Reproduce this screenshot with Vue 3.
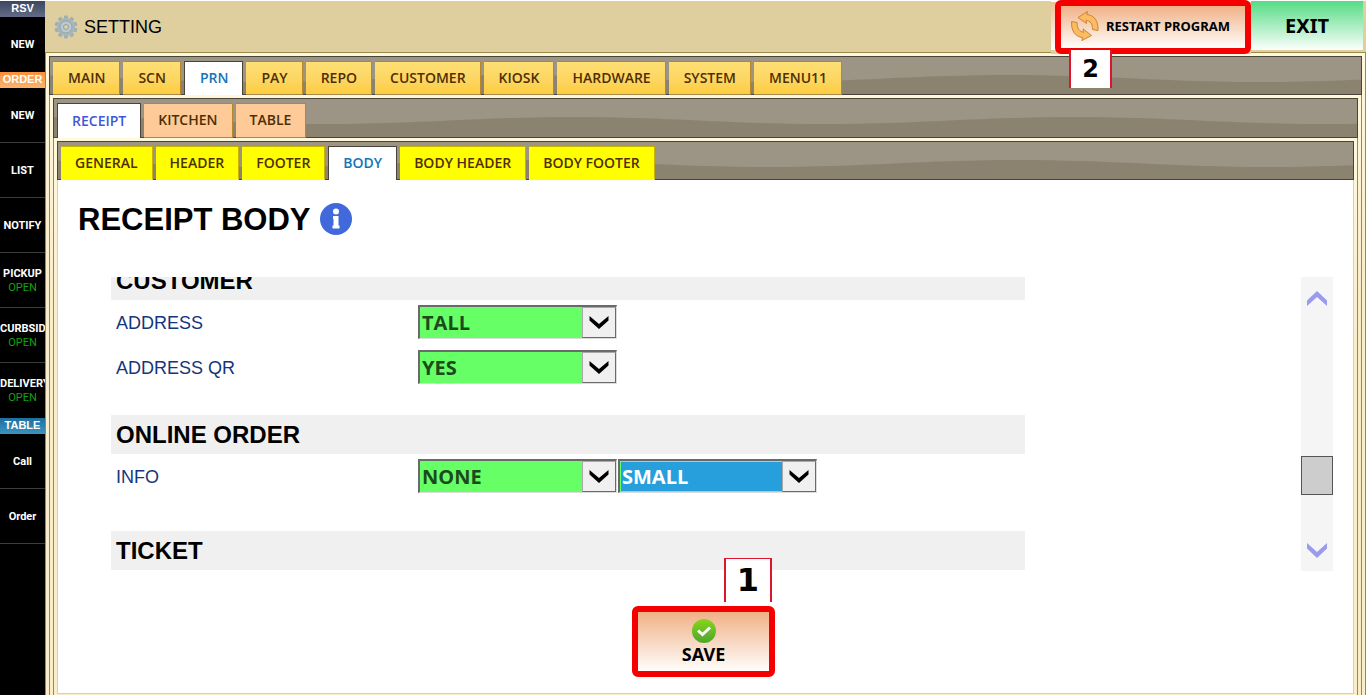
<script setup>
import { ref } from 'vue'

const sidebar = [
  { title: 'RSV', tone: 'slate', items: [{ label: 'NEW' }] },
  {
    title: 'ORDER',
    tone: 'orange',
    items: [
      { label: 'NEW' },
      { label: 'LIST' },
      { label: 'NOTIFY' },
      { label: 'PICKUP', status: 'OPEN' },
      { label: 'CURBSIDE', status: 'OPEN' },
      { label: 'DELIVERY', status: 'OPEN' }
    ]
  },
  { title: 'TABLE', tone: 'blue', items: [{ label: 'Call' }, { label: 'Order' }] }
]

const mainTabs = ['MAIN', 'SCN', 'PRN', 'PAY', 'REPO', 'CUSTOMER', 'KIOSK', 'HARDWARE', 'SYSTEM', 'MENU11']
const printTabs = ['RECEIPT', 'KITCHEN', 'TABLE']
const receiptTabs = ['GENERAL', 'HEADER', 'FOOTER', 'BODY', 'BODY HEADER', 'BODY FOOTER']

const mainTab = ref('PRN')
const printTab = ref('RECEIPT')
const receiptTab = ref('BODY')

const sections = ref([
  {
    title: 'CUSTOMER',
    rows: [
      { id: 'address', label: 'ADDRESS', fields: [{ value: 'TALL', options: ['TALL', 'SMALL', 'NONE'] }] },
      { id: 'address-qr', label: 'ADDRESS QR', fields: [{ value: 'YES', options: ['YES', 'NO'] }] }
    ]
  },
  {
    title: 'ONLINE ORDER',
    rows: [
      {
        id: 'info',
        label: 'INFO',
        fields: [
          { value: 'NONE', options: ['NONE', 'TALL', 'SMALL'] },
          { value: 'SMALL', options: ['SMALL', 'TALL'], active: true }
        ]
      }
    ]
  },
  { title: 'TICKET', rows: [] }
])
</script>

<template>
  <div class="app">
    <nav class="sidebar" aria-label="Orders">
      <section v-for="group in sidebar" :key="group.title" class="group">
        <h2 class="group-title" :class="group.tone">{{ group.title }}</h2>
        <button v-for="item in group.items" :key="item.label" type="button" class="side-item">
          <span>{{ item.label }}</span>
          <span v-if="item.status" class="status">{{ item.status }}</span>
        </button>
      </section>
    </nav>

    <div class="main">
      <header class="topbar">
        <svg class="gear" viewBox="0 0 24 24" aria-hidden="true">
          <g fill="#9fb0b4">
            <rect x="10" y="0.5" width="4" height="23" rx="1" />
            <rect x="10" y="0.5" width="4" height="23" rx="1" transform="rotate(36 12 12)" />
            <rect x="10" y="0.5" width="4" height="23" rx="1" transform="rotate(72 12 12)" />
            <rect x="10" y="0.5" width="4" height="23" rx="1" transform="rotate(108 12 12)" />
            <rect x="10" y="0.5" width="4" height="23" rx="1" transform="rotate(144 12 12)" />
          </g>
          <circle cx="12" cy="12" r="9" fill="#a9b6b8" />
          <circle cx="12" cy="12" r="6" fill="#b9c9cf" stroke="#94a5ab" stroke-width="1" />
          <circle cx="12" cy="12" r="2.500" fill="#d9cfa8" stroke="#8fa0a6" stroke-width="1" />
        </svg>
        <h1 class="app-title">SETTING</h1>
        <div class="restart-wrap">
          <button type="button" class="restart">
            <svg class="restart-icon" viewBox="0 0 28 30" aria-hidden="true">
              <g fill="#fabb62" stroke="#cf8234" stroke-width="1" stroke-linejoin="round">
                <path d="M7 6.500 L16.500 0.500 L15.800 3.600 C23 4 27.500 9.500 27 19.500 L21.500 18.500 C21.500 13 19.500 9.800 15 9.300 L15.500 12.500 Z" />
                <path d="M0.600 10.500 L6 11.500 C6 17.500 8.500 20.500 12.500 21.300 L12 17.800 L20.500 24.500 L10.800 29.600 L11.500 26.600 C4 25.500 0 19.500 0.600 10.500 Z" />
              </g>
            </svg>
            RESTART PROGRAM
          </button>
          <span class="callout callout-two">2</span>
        </div>
        <button type="button" class="exit">EXIT</button>
      </header>

      <div class="frame">
        <div class="tabbar" role="tablist" aria-label="Settings">
          <button
            v-for="tab in mainTabs" :key="tab" type="button" role="tab"
            class="tab gold" :class="{ on: tab === mainTab }" :aria-selected="tab === mainTab"
            @click="mainTab = tab"
          >{{ tab }}</button>
        </div>
        <div class="pane">
          <div class="tabbar second" role="tablist" aria-label="Printing">
            <button
              v-for="tab in printTabs" :key="tab" type="button" role="tab"
              class="tab peach" :class="{ on: tab === printTab }" :aria-selected="tab === printTab"
              @click="printTab = tab"
            >{{ tab }}</button>
          </div>
          <div class="pane">
            <div class="tabbar" role="tablist" aria-label="Receipt">
              <button
                v-for="tab in receiptTabs" :key="tab" type="button" role="tab"
                class="tab yellow" :class="{ on: tab === receiptTab }" :aria-selected="tab === receiptTab"
                @click="receiptTab = tab"
              >{{ tab }}</button>
            </div>
            <main class="content">
              <div class="heading">
                <h2>RECEIPT BODY</h2>
                <svg viewBox="0 0 32 32" role="img" aria-label="Information">
                  <circle cx="16" cy="16" r="16" fill="#4169dc" />
                  <circle cx="16" cy="8.500" r="3" fill="#fff" />
                  <path d="M13 13h5.500v9.500h1v3h-7v-3h1v-6.500h-0.500z" fill="#fff" />
                </svg>
              </div>

              <div class="viewport">
                <div class="sections">
                  <section v-for="section in sections" :key="section.title" class="section">
                    <h3>{{ section.title }}</h3>
                    <div v-for="row in section.rows" :key="row.id" class="row">
                      <label :for="row.id + '-0'">{{ row.label }}</label>
                      <div v-for="(field, i) in row.fields" :key="i" class="field">
                        <select
                          :id="row.id + '-' + i" v-model="field.value"
                          :class="{ active: field.active }" :aria-label="row.label"
                        >
                          <option v-for="option in field.options" :key="option">{{ option }}</option>
                        </select>
                        <span class="arrow">
                          <svg viewBox="0 0 20 13" aria-hidden="true"><path d="M0.500 0 L10 8 L19.500 0 V4.500 L10 13 L0.500 4.500 Z" fill="#000" /></svg>
                        </span>
                      </div>
                    </div>
                  </section>
                </div>
                <div class="scroller">
                  <button type="button" aria-label="Scroll up">
                    <svg viewBox="0 0 20 15" aria-hidden="true"><path d="M0 9.500 L10 0 L20 9.500 V15 L10 6 L0 15 Z" fill="#9a9aef" /></svg>
                  </button>
                  <span class="thumb"></span>
                  <button type="button" aria-label="Scroll down">
                    <svg viewBox="0 0 20 15" aria-hidden="true"><path d="M0 0 L10 9 L20 0 V5.500 L10 15 L0 5.500 Z" fill="#9a9aef" /></svg>
                  </button>
                </div>
              </div>

              <div class="actions">
                <div class="save-wrap">
                  <span class="callout callout-one">1</span>
                  <button type="button" class="save">
                    <svg viewBox="0 0 24 24" aria-hidden="true">
                      <defs>
                        <linearGradient id="leaf" x1="0" y1="0" x2="0" y2="1">
                          <stop offset="0" stop-color="#86d61c" />
                          <stop offset="1" stop-color="#4fa52c" />
                        </linearGradient>
                      </defs>
                      <circle cx="12" cy="12" r="12" fill="url(#leaf)" />
                      <path d="M6 11.500 L10.500 15.500 L18 8.500" fill="none" stroke="#fff" stroke-width="3" />
                    </svg>
                    SAVE
                  </button>
                </div>
              </div>
            </main>
          </div>
        </div>
      </div>
    </div>
  </div>
</template>

<style>
body {
  margin: 0;
  background: #fff;
}
</style>

<style scoped>
* {
  box-sizing: border-box;
}

.app {
  display: flex;
  min-height: 100vh;
  padding-top: 1px;
  font-family: "Liberation Sans", Arial, sans-serif;
  color: #000;
}

h1,
h2,
h3 {
  margin: 0;
}

button {
  margin: 0;
  padding: 0;
  border: 0;
  color: inherit;
  font-family: inherit;
  cursor: pointer;
}

svg {
  display: block;
  flex: none;
}

/* Left rail */
.sidebar {
  flex: none;
  width: 45px;
  background: #000;
  overflow: hidden;
}

.group-title {
  height: 16px;
  color: #fff;
  font-size: 11px;
  line-height: 15px;
  text-align: center;
}

.slate {
  background: linear-gradient(#3d4660, #626c88);
}

.orange {
  background: linear-gradient(#f98f3c, #fbb46c);
}

.blue {
  background: linear-gradient(#1d6f9f, #3c93bf);
}

.side-item {
  display: flex;
  flex-direction: column;
  justify-content: center;
  width: 100%;
  height: 55px;
  padding-top: 2px;
  border-bottom: 1px solid #3c3c3c;
  background: #000;
  color: #fff;
  font-family: Roboto, "Liberation Sans", sans-serif;
  font-size: 11px;
  font-weight: bold;
  line-height: 14px;
  white-space: nowrap;
}

.group:not(:last-child) .side-item:last-child {
  border-bottom-color: #000;
}

.status {
  color: #10a310;
  font-weight: normal;
}

/* Header */
.main {
  display: flex;
  flex: 1;
  flex-direction: column;
  min-width: 0;
}

.topbar {
  display: flex;
  align-items: center;
  height: 51px;
  padding: 0 3px 0 9px;
  background: #dfcf9e;
}

.gear {
  width: 24px;
  height: 24px;
}

.app-title {
  flex: 1;
  margin-left: 6px;
  padding-top: 2px;
  font-size: 18px;
  font-weight: normal;
}

.restart-wrap,
.save-wrap {
  position: relative;
}

.restart-wrap {
  align-self: flex-start;
  margin-top: -1px;
  padding-left: 4px;
  background: linear-gradient(#fff 2px, #f3bd95 2px, #fff 50px, #dfcf9e 50px);
}

.restart,
.save {
  border: 6px solid #f40000;
  border-radius: 6px;
  background: linear-gradient(#f0b186, #fffdfb) padding-box;
  font-family: "Noto Sans", "Open Sans", sans-serif;
  font-weight: bold;
}

.restart {
  display: flex;
  position: relative;
  gap: 7px;
  align-items: center;
  width: 196px;
  height: 54px;
  padding: 0 0 2px 10px;
  font-size: 13px;
  white-space: nowrap;
}

.restart-icon {
  width: 28px;
  height: 30px;
}

.exit {
  align-self: flex-start;
  width: 112px;
  height: 49px;
  background: linear-gradient(#55dc85, #fbfffc);
  font-family: "Noto Sans", "Open Sans", sans-serif;
  font-size: 20px;
  font-weight: bold;
}

.callout {
  position: absolute;
  background: #fff;
  border: 0 solid #e0142c;
  font-family: "DejaVu Sans", Verdana, sans-serif;
  font-weight: bold;
  text-align: center;
}

.callout-two {
  top: 50px;
  left: 18px;
  width: 43px;
  height: 38px;
  border-width: 0 2px;
  font-size: 24px;
  line-height: 38px;
}

.callout-one {
  top: -48px;
  left: 92px;
  width: 48px;
  height: 44px;
  border-width: 1px 2px 0;
  font-size: 32px;
  line-height: 43px;
}

/* Nested tab frames */
.frame,
.pane {
  display: flex;
  flex: 1;
  flex-direction: column;
  padding: 3px 3px 0;
  border: 1px solid #9c8848;
  border-width: 0 1px;
  background: linear-gradient(#fff8dc, #f9edca 200px);
}

.frame {
  border-top-width: 1px;
}

.tabbar {
  display: flex;
  gap: 3px;
  align-items: stretch;
  height: 39px;
  padding: 4px 3px 0;
  border: 1px solid #4a4438;
  background-color: #9c9484;
  background-image:
    url("data:image/svg+xml,%3Csvg xmlns='http://www.w3.org/2000/svg' width='500' height='39'%3E%3Cpath d='M0 25C90 25 160 18 250 18S410 25 500 25V39H0Z' fill='%238b8370'/%3E%3C/svg%3E");
  background-repeat: repeat-x;
  background-position: 210px 0;
}

.tabbar.second {
  height: 40px;
  background-position: 270px 0;
}

.tab {
  margin-bottom: -1px;
  padding: 0 14px 2px;
  border: 1px solid #b8862c;
  border-left: 0;
  border-bottom-color: #a8884c;
  color: #4e2f04;
  font-family: "Open Sans", "Noto Sans", sans-serif;
  font-size: 14px;
  font-weight: 600;
  white-space: nowrap;
}

.gold {
  padding-left: 15px;
  background: linear-gradient(#fddf74, #fdd560 60%, #fccd3c);
}

.peach {
  background: #fecb98;
}

.yellow {
  border-color: #c8b400;
  border-bottom-color: #ffff00;
  background: #ffff00;
}

.tab.on {
  border: 1px solid #4a4438;
  border-bottom: 0;
  background: #fff;
  color: #1474b8;
}

.tab.peach.on {
  color: #4058d8;
}

/* Page content */
.content {
  display: flex;
  flex: 1;
  flex-direction: column;
  margin-bottom: 1px;
  padding: 19px 20px 0;
  border: 1px solid #ddd0a4;
  border-top: 0;
  background: #fff;
}

.heading {
  display: flex;
  gap: 9px;
  align-items: center;
  height: 40px;
}

.heading h2 {
  padding-top: 2px;
  font-size: 31px;
  line-height: 40px;
}

.heading svg {
  width: 32px;
  height: 32px;
}

.viewport {
  display: flex;
  justify-content: space-between;
  height: 294px;
  margin-top: 38px;
  padding-left: 33px;
}

.sections {
  display: flex;
  flex-direction: column;
  justify-content: flex-end;
  width: calc(75% - 3px);
  padding-bottom: 1px;
  overflow: hidden;
}

.section {
  flex: none;
}

.section:first-child {
  margin-bottom: 25px;
}

.section:nth-child(2) {
  margin-bottom: 32px;
}

.section h3 {
  height: 39px;
  padding-left: 5px;
  background: #f0f0f0;
  font-size: 24px;
  line-height: 40px;
}

.row {
  display: flex;
  align-items: flex-start;
  height: 45px;
  padding: 5px 0 0 5px;
}

.row label {
  width: 302px;
  color: #14367c;
  font-size: 18px;
  line-height: 36px;
}

.field {
  position: relative;
  width: 200px;
}

.field select {
  appearance: none;
  display: block;
  width: 199px;
  height: 34px;
  padding: 0 36px 0 2px;
  border: 2px solid #6a6a6a;
  border-right: 1px solid #dcdcdc;
  border-bottom: 1px solid #dcdcdc;
  border-radius: 0;
  background: #66ff66;
  color: #1c4a1c;
  font-family: "Open Sans", "Noto Sans", sans-serif;
  font-size: 20px;
  font-weight: bold;
}

.field select.active {
  background: #269fdc;
  color: #fff;
  box-shadow: inset 0 0 0 1px #66ff66;
}

.arrow {
  display: grid;
  position: absolute;
  top: 2px;
  right: 2px;
  width: 34px;
  height: 31px;
  padding-bottom: 1px;
  place-items: center;
  border: 1px solid #6a6a6a;
  border-top-color: #a8a8a8;
  border-left-color: #a8a8a8;
  background: #f0f0f0;
  pointer-events: none;
}

.arrow svg {
  width: 20px;
  height: 13px;
}

.scroller {
  display: flex;
  flex-direction: column;
  width: 32px;
  background: #f5f5f5;
}

.scroller button {
  display: grid;
  height: 42px;
  place-items: center;
  background: transparent;
}

.scroller svg {
  width: 20px;
  height: 15px;
}

.thumb {
  height: 39px;
  margin: auto 0 34px;
  border: 1px solid #555;
  background: #cdcdcd;
}

.actions {
  display: flex;
  justify-content: center;
  margin-top: 35px;
  padding: 0 4px 16px 0;
}

.save {
  display: flex;
  flex-direction: column;
  align-items: center;
  width: 143px;
  height: 71px;
  padding-top: 7px;
  font-size: 18px;
  line-height: 22px;
}

.save svg {
  width: 24px;
  height: 24px;
}
</style>
